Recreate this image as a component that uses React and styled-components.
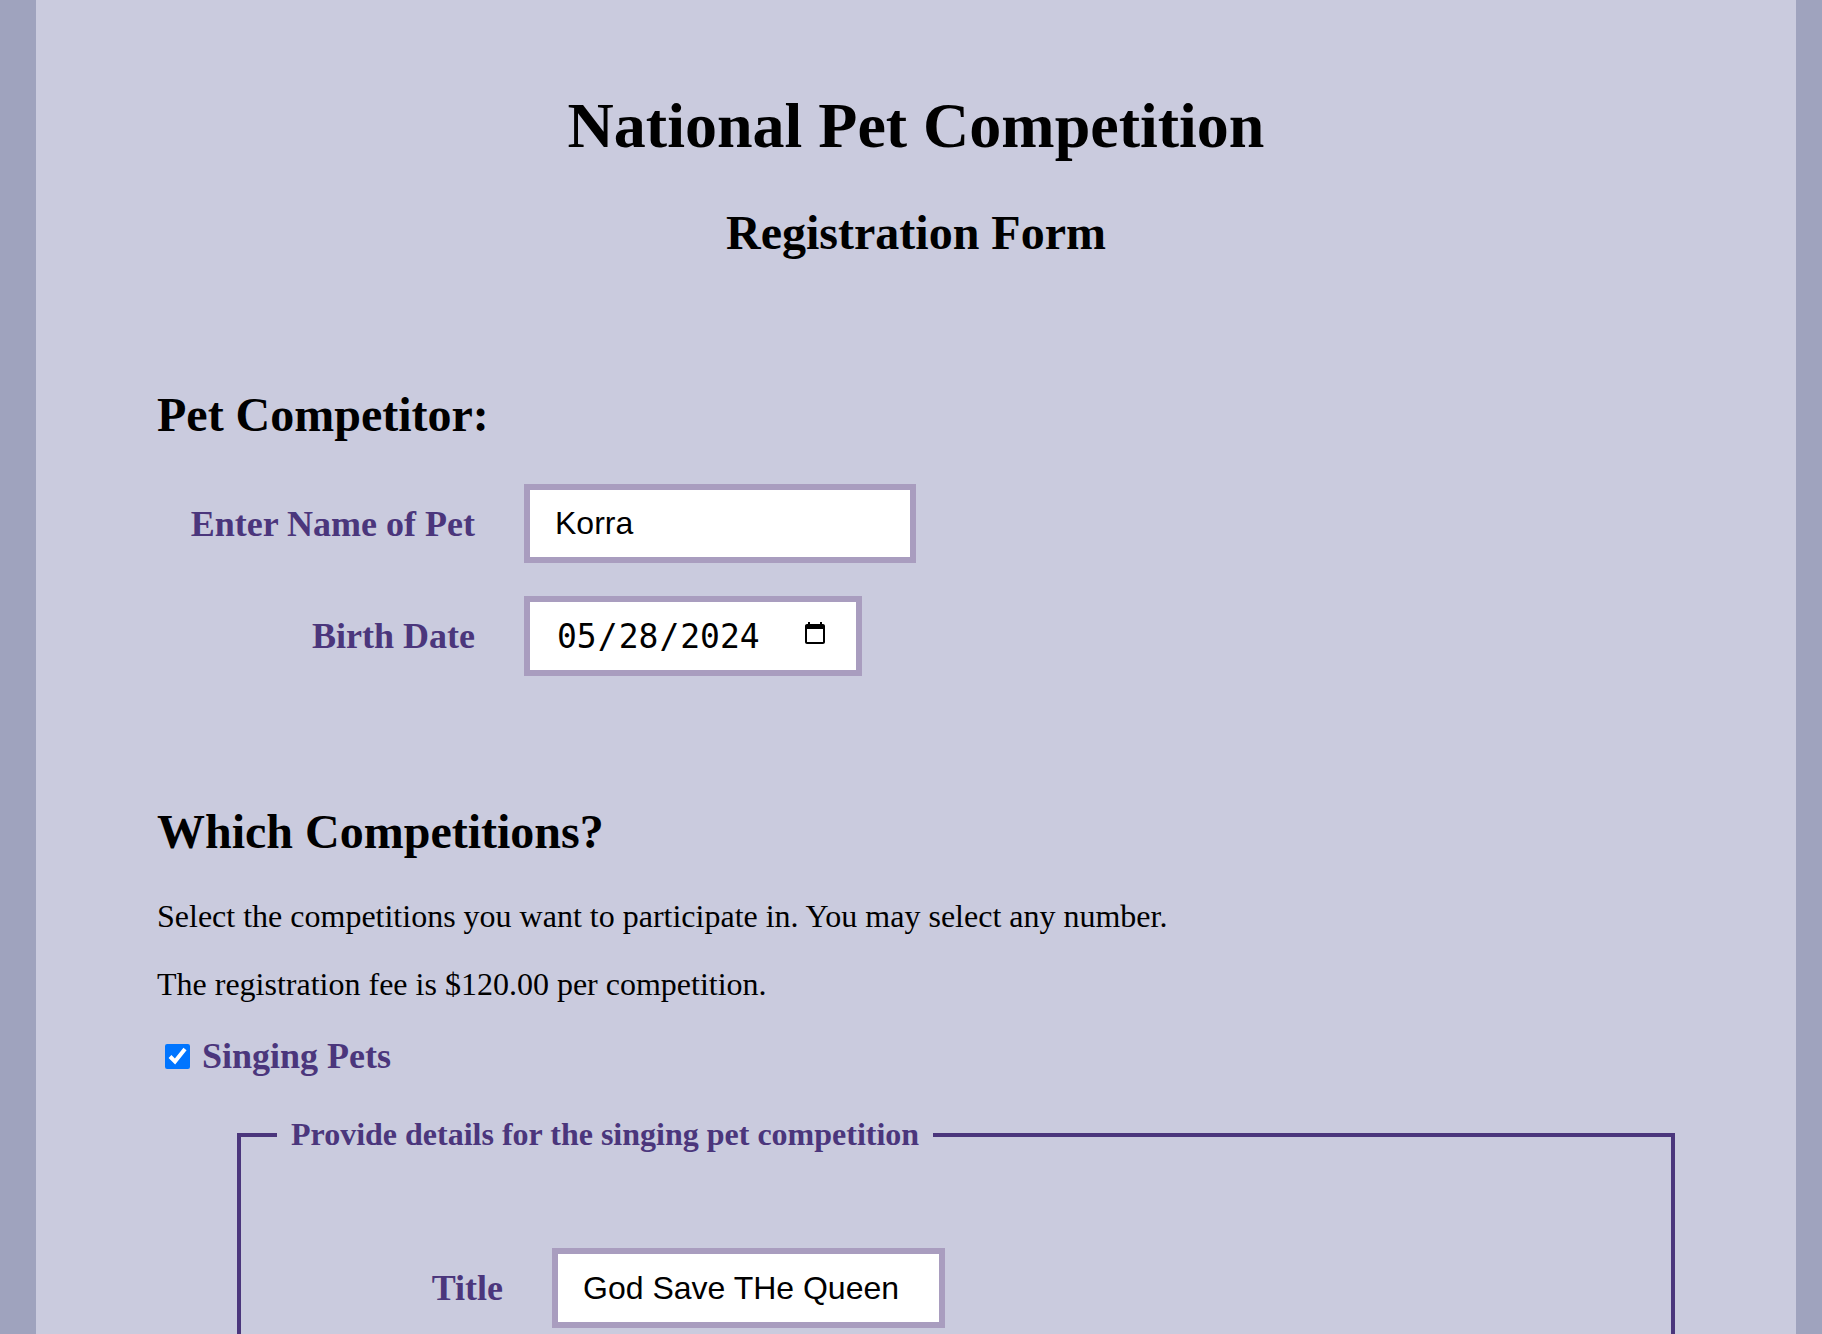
import React, { useState } from 'react';
import styled, { createGlobalStyle } from 'styled-components';

const GlobalStyle = createGlobalStyle`
  html, body {
    margin: 0;
    padding: 0;
    background: #9fa3be;
  }
  body {
    font-family: "Liberation Serif", "Times New Roman", serif;
    font-size: 32px;
    color: #000;
  }
`

const Page = styled.main`
  margin: 0 26px 0 36px;
  min-height: 100vh;
  background: #cacbde;
  padding: 89px 121px 0;
  box-sizing: border-box;
  overflow: hidden;
`

const Title = styled.h1`
  margin: 0;
  font-size: 64px;
  font-weight: 700;
  text-align: center;
  line-height: normal;
`

const SubTitle = styled.h2`
  margin: 42px 0 0;
  font-size: 48px;
  font-weight: 700;
  text-align: center;
  line-height: normal;
`

const SectionTitle = styled.h2`
  margin: ${({ top }) => top}px 0 0;
  font-size: 48px;
  font-weight: 700;
  line-height: normal;
`

const Row = styled.div`
  display: flex;
  align-items: center;
  gap: 49px;
  margin-top: ${({ top }) => top}px;
`

const Label = styled.label`
  width: ${({ w }) => w}px;
  flex: none;
  text-align: right;
  font-size: 36px;
  font-weight: 700;
  color: #4b367c;
  line-height: normal;
`

const TextInput = styled.input`
  box-sizing: border-box;
  width: ${({ w }) => w}px;
  height: ${({ h }) => h || 79}px;
  border: 6px solid #a99dbf;
  background: #fff;
  padding: 0 25px;
  font-family: "Liberation Sans", Arial, sans-serif;
  font-size: 32px;
  color: #000;
  outline: none;
`

const DateInput = styled(TextInput)`
  width: 338px;
  height: 80px;
  padding: 0 26px 0 26px;
  font-family: "DejaVu Sans Mono", "Liberation Mono", monospace;
  font-size: 33px;

  &::-webkit-calendar-picker-indicator {
    width: 26px;
    height: 30px;
    margin-left: 16px;
  }
`

const Text = styled.p`
  margin: ${({ top }) => top}px 0 0;
  font-size: 32px;
  line-height: normal;
`

const CheckRow = styled.div`
  display: flex;
  align-items: center;
  margin-top: 32px;
`

const Check = styled.input`
  width: 25px;
  height: 25px;
  margin: 0 12px 0 8px;
`

const CheckLabel = styled.label`
  font-size: 36px;
  font-weight: 700;
  color: #4b367c;
  line-height: normal;
`

const Details = styled.fieldset`
  margin: 39px 0 0 80px;
  border: 4px solid #4b367c;
  padding: 95px 0 60px 36px;
  min-width: 0;
`

const Legend = styled.legend`
  padding: 0 14px;
  font-size: 32px;
  font-weight: 700;
  color: #4b367c;
  line-height: normal;
`

export default function App() {
  const [name, setName] = useState('Korra');
  const [birth, setBirth] = useState('2024-05-28');
  const [singing, setSinging] = useState(true);
  const [song, setSong] = useState('God Save THe Queen');

  return (
    <>
      <GlobalStyle />
      <Page>
        <Title>National Pet Competition</Title>
        <SubTitle>Registration Form</SubTitle>

        <SectionTitle top={127}>Pet Competitor:</SectionTitle>
        <Row top={42}>
          <Label w={318} htmlFor="petName">Enter Name of Pet</Label>
          <TextInput w={392} id="petName" value={name} onChange={e => setName(e.target.value)} />
        </Row>
        <Row top={33}>
          <Label w={318} htmlFor="birth">Birth Date</Label>
          <DateInput type="date" id="birth" value={birth} onChange={e => setBirth(e.target.value)} />
        </Row>

        <SectionTitle top={128}>Which Competitions?</SectionTitle>
        <Text top={39}>Select the competitions you want to participate in. You may select any number.</Text>
        <Text top={31}>The registration fee is $120.00 per competition.</Text>

        <CheckRow>
          <Check type="checkbox" id="singing" checked={singing} onChange={e => setSinging(e.target.checked)} />
          <CheckLabel htmlFor="singing">Singing Pets</CheckLabel>
        </CheckRow>

        {singing && (
          <Details>
            <Legend>Provide details for the singing pet competition</Legend>
            <Row top={0}>
              <Label w={226} htmlFor="song">Title</Label>
              <TextInput w={393} h={80} id="song" value={song} onChange={e => setSong(e.target.value)} />
            </Row>
          </Details>
        )}
      </Page>
    </>
  );
}
